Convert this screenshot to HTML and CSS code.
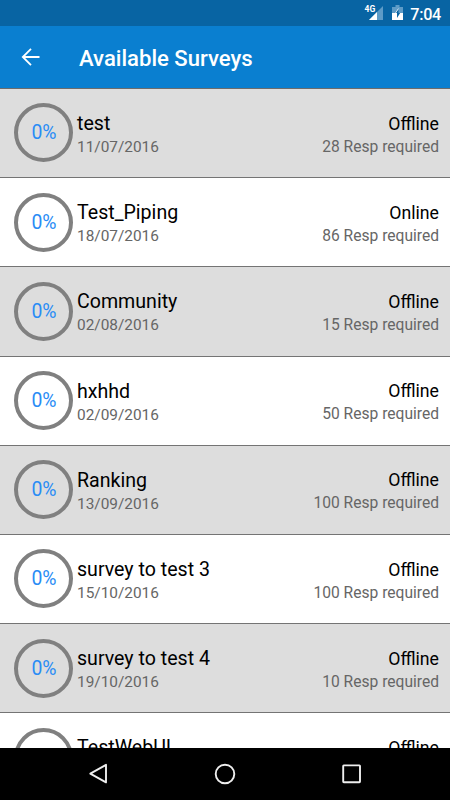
FILE: index.html
```html
<!DOCTYPE html>
<html lang="en">
<head>
<meta charset="utf-8">
<title>Available Surveys</title>
<link rel="stylesheet" href="styles.css">
</head>
<body>
<div class="status">
  <svg class="signal" width="22" height="18" viewBox="0 0 22 18">
    <path d="M19 2V16H5Z" fill="#5d9bc7"/>
    <path d="M13 8V16H5Z" fill="#fff"/>
    <rect width="10.5" height="8" fill="#0864a3"/>
    <text class="network" x="0.5" y="7.5">4G</text>
  </svg>
  <svg class="battery" width="12" height="16" viewBox="0 0 12 16">
    <path d="M3.5 0h4v2H11v6H0V2h3.5z" fill="#5d9bc7"/>
    <path d="M0 8h11v7H0z" fill="#fff"/>
    <path d="M3.2 8H5V13L8.2 8H6.5V4Z" fill="#0864a3"/>
    <path d="M6.5 3.6 3.2 8.4H5" fill="none" stroke="#fff" stroke-width=".8"/>
  </svg>
  <span class="clock">7:04</span>
</div>
<header class="bar">
  <svg class="back" width="20" height="20" viewBox="0 0 20 20"><path d="M18.5 10H2M10 1.8 1.8 10 10 18.2" fill="none" stroke="#fff" stroke-width="1.8"/></svg>
  <h1 class="title">Available Surveys</h1>
</header>
<main class="list">
  <div class="row"><div class="ring">0%</div><div class="info"><div class="name">test</div><div class="sub date">11/07/2016</div></div><div class="state"><div class="mode">Offline</div><div class="sub">28 Resp required</div></div></div>
  <div class="row"><div class="ring">0%</div><div class="info"><div class="name">Test_Piping</div><div class="sub date">18/07/2016</div></div><div class="state"><div class="mode">Online</div><div class="sub">86 Resp required</div></div></div>
  <div class="row"><div class="ring">0%</div><div class="info"><div class="name">Community</div><div class="sub date">02/08/2016</div></div><div class="state"><div class="mode">Offline</div><div class="sub">15 Resp required</div></div></div>
  <div class="row"><div class="ring">0%</div><div class="info"><div class="name">hxhhd</div><div class="sub date">02/09/2016</div></div><div class="state"><div class="mode">Offline</div><div class="sub">50 Resp required</div></div></div>
  <div class="row"><div class="ring">0%</div><div class="info"><div class="name">Ranking</div><div class="sub date">13/09/2016</div></div><div class="state"><div class="mode">Offline</div><div class="sub">100 Resp required</div></div></div>
  <div class="row"><div class="ring">0%</div><div class="info"><div class="name">survey to test 3</div><div class="sub date">15/10/2016</div></div><div class="state"><div class="mode">Offline</div><div class="sub">100 Resp required</div></div></div>
  <div class="row"><div class="ring">0%</div><div class="info"><div class="name">survey to test 4</div><div class="sub date">19/10/2016</div></div><div class="state"><div class="mode">Offline</div><div class="sub">10 Resp required</div></div></div>
  <div class="row"><div class="ring"></div><div class="info"><div class="name">TestWebUI</div></div><div class="state"><div class="mode">Offline</div></div></div>
</main>
<nav class="nav">
  <svg width="20" height="22" viewBox="0 0 20 22"><path d="M18 1.8V19.4L2.3 10.6Z" fill="none" stroke="#eee" stroke-width="1.9" stroke-linejoin="round"/></svg>
  <svg width="22" height="22" viewBox="0 0 22 22"><circle cx="11" cy="11" r="9.3" fill="none" stroke="#eee" stroke-width="1.9"/></svg>
  <svg width="20" height="20" viewBox="0 0 20 20"><rect x="1.2" y="1.4" width="16.8" height="16.8" rx=".6" fill="none" stroke="#eee" stroke-width="1.9"/></svg>
</nav>
</body>
</html>
```
FILE: styles.css
```css
* { box-sizing: border-box; }
body {
  margin: 0;
  width: 450px;
  height: 800px;
  overflow: hidden;
  display: flex;
  flex-direction: column;
  font-family: Roboto, sans-serif;
  background: #fff;
}
.status {
  flex: none;
  height: 26px;
  padding-right: 9px;
  display: flex;
  justify-content: flex-end;
  align-items: center;
  background: #0864a3;
  color: #fff;
}
.signal { margin-right: 6px; }
.network { font-size: 8.5px; font-weight: 700; fill: #fff; }
.battery { margin: 0 6px 0 0; }
.clock { font-size: 16.2px; font-weight: 500; line-height: 26px; padding-top: 3px; letter-spacing: -0.3px; }
.bar {
  flex: none;
  height: 62px;
  padding-left: 21px;
  display: flex;
  align-items: center;
  background: #0a7fd0;
  color: #fff;
}
.back { margin-right: 38px; }
.title { margin: 2px 0 0; font-size: 22.1px; font-weight: 500; line-height: 28px; }
.list { flex: 1; min-height: 0; overflow: hidden; border-top: 1px solid #6c6c6c; }
.row {
  height: 89.2px;
  display: flex;
  align-items: flex-start;
  padding: 14.4px 11px 0 14px;
  border-bottom: 1.4px solid #747474;
  background: #fff;
}
.row:nth-child(odd) { background: #ddd; }
.ring {
  width: 59px;
  height: 59px;
  border: 4.4px solid #808080;
  border-radius: 50%;
  padding-left: 1px;
  font-size: 19.4px;
  line-height: 51px;
  text-align: center;
  color: #2a8cf5;
}
.info { margin-left: 4px; padding-top: 7.6px; flex: 1; }
.state { padding-top: 7.2px; text-align: right; }
.name { font-size: 19.6px; line-height: 26px; color: #000; }
.mode { font-size: 17.7px; line-height: 26px; color: #000; }
.sub { font-size: 15.6px; line-height: 21px; color: #666; }
.date { font-size: 15.4px; line-height: 20px; }
.nav {
  flex: none;
  height: 52px;
  display: grid;
  grid-template-columns: 127px 127px 127px;
  justify-content: center;
  justify-items: center;
  align-items: center;
  background: #000;
}
```
